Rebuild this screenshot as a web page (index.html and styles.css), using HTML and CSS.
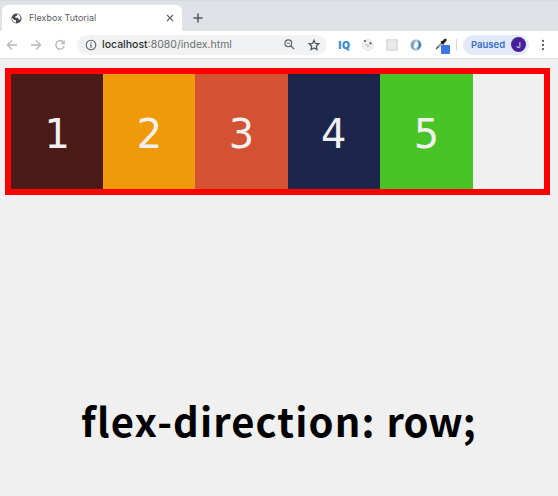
FILE: index.html
```html
<!DOCTYPE html>
<html lang="en">
<head>
<meta charset="utf-8">
<title>Flexbox Tutorial</title>
<link rel="stylesheet" href="styles.css">
</head>
<body>
<header class="tabs">
  <div class="tab">
    <svg class="globe" viewBox="0 0 12 12"><circle cx="6" cy="6" r="5.5" fill="#494c50"/><path d="M1 5.2 3.3 7.4 5.5 7.9 5.3 10.6C2.8 10.3 1.2 8.3 1 5.2ZM7 1.2 6.5 3 4.6 3.6 4.9 5.1 7.4 5.3 8.5 7.1 10 7.4C11 5.4 10 2.3 7 1.2Z" fill="#fff"/></svg>
    <span class="title">Flexbox Tutorial</span>
    <svg class="close" viewBox="0 0 8 8"><path d="m1 1 6 6M7 1 1 7" stroke="#5f6368" stroke-width="1.2"/></svg>
  </div>
  <svg class="plus" viewBox="0 0 10 10"><path d="M5 .5v9M.5 5h9" stroke="#54585c" stroke-width="1.5"/></svg>
</header>
<nav class="toolbar">
  <svg class="nav" viewBox="0 0 12 12"><path d="M11 6H1.5M6 1.4 1.4 6 6 10.6" fill="none" stroke="#b5b7ba" stroke-width="1.3"/></svg>
  <svg class="nav" viewBox="0 0 12 12"><path d="M1 6h9.5M6 1.4 10.6 6 6 10.6" fill="none" stroke="#b5b7ba" stroke-width="1.3"/></svg>
  <svg class="nav" viewBox="0 0 12 12"><path d="M9.6 3.2A4.3 4.3 0 1 0 10.3 7" fill="none" stroke="#b5b7ba" stroke-width="1.3"/><path d="M10.8 1v4.2H6.6Z" fill="#b5b7ba"/></svg>
  <div class="address">
    <svg class="info" viewBox="0 0 12 12"><circle cx="6" cy="6" r="4.8" fill="none" stroke="#5f6368" stroke-width="1.1"/><path d="M6 5.3v3.4M6 3.2v1.2" stroke="#5f6368" stroke-width="1.2"/></svg>
    <span class="url"><b>localhost</b>:8080/index.html</span>
    <svg class="lens" viewBox="0 0 12 12"><circle cx="4.7" cy="4.7" r="3.7" fill="none" stroke="#5f6368" stroke-width="1.2"/><path d="m7.3 7.3 3.7 3.7" stroke="#5f6368" stroke-width="1.4"/><path d="M3 4.7h3.4" stroke="#5f6368"/></svg>
    <svg class="star" viewBox="0 0 12 12"><path d="m6 1.2 1.4 3.2 3.5.4-2.6 2.4.7 3.4-3-1.7-3 1.7.7-3.4L1.1 4.8l3.5-.4Z" fill="none" stroke="#4f5357" stroke-width="1.2"/></svg>
  </div>
  <span class="iq">IQ</span>
  <svg class="ext face" viewBox="0 0 12 12"><circle cx="6" cy="6" r="5.5" fill="#f2f2f2" stroke="#dedede" stroke-width=".8"/><circle cx="6" cy="6.7" r="1.5" fill="#ccc"/><path d="M2 1h2v2H2Z" fill="#777"/><path d="M7.5 3.3h2v2h-2Z" fill="#555"/><path d="M3.5 5h1v1h-1Z" fill="#999"/></svg>
  <svg class="ext atom" viewBox="0 0 12 12"><path d="M0 0h12v12H0Z" fill="#e0e0e0"/><g fill="none" stroke="#f0f0f0" stroke-width=".8"><ellipse cx="6" cy="6" rx="4.6" ry="1.8"/><ellipse cx="6" cy="6" rx="4.6" ry="1.8" transform="rotate(60 6 6)"/><ellipse cx="6" cy="6" rx="4.6" ry="1.8" transform="rotate(120 6 6)"/></g></svg>
  <svg class="ext swirl" viewBox="0 0 12 12"><circle cx="6" cy="6" r="5.8" fill="#b3c8d8"/><path d="M5 1C-.3 3 .3 9.7 4.8 11 2.6 8 3 4.5 5 1Z" fill="#7898b2"/><path d="M7.3 1C12.5 3 12 9.4 6.7 11 9.5 8 9.2 4 7.3 1Z" fill="#4179a9"/><ellipse cx="6" cy="6" rx="1.8" ry="3.4" fill="#f7fafc" transform="rotate(20 6 6)"/></svg>
  <svg class="dropper" viewBox="0 0 16 18"><path d="m2.200 10.800 5.300-5.300" stroke="#a0a5a9" stroke-width="2.400"/><path d="m1 12 2.200-2.200" stroke="#555" stroke-width="1.400"/><path d="m6 4.300 3 3" stroke="#222" stroke-width="1.600"/><path d="m7.500 5.800 2.800-2.800" stroke="#222" stroke-width="2.800" stroke-linecap="round"/><rect x="6" y="8" width="9" height="9" rx="1" fill="#3878e6"/></svg>
  <i class="divider"></i>
  <div class="profile"><span>Paused</span><span class="avatar">J</span></div>
  <svg class="dots" viewBox="0 0 4 12"><g fill="#55585c"><circle cx="2" cy="1.9" r="1.15"/><circle cx="2" cy="6" r="1.15"/><circle cx="2" cy="10.1" r="1.15"/></g></svg>
</nav>
<main>
  <section class="container">
    <div class="box one">1</div>
    <div class="box two">2</div>
    <div class="box three">3</div>
    <div class="box four">4</div>
    <div class="box five">5</div>
  </section>
  <h1 class="caption"><span class="property">flex-direction:</span> row;</h1>
</main>
</body>
</html>
```
FILE: styles.css
```css
* { box-sizing: border-box; }
body { margin: 0; width: 558px; height: 496px; overflow: hidden; background: #f0f0f0; font-family: Inter, "Liberation Sans", sans-serif; }
svg { display: block; flex: none; overflow: visible; }
.tabs { display: flex; align-items: flex-end; height: 31px; background: linear-gradient(#d5dadd 0, #dfe2e7 2px); }
.tab { display: flex; align-items: center; width: 180px; height: 26px; margin-left: 2px; padding-left: 9px; background: #fff; border-radius: 6px 6px 0 0; }
.globe { width: 11px; height: 11px; }
.title { width: 137px; margin-left: 7px; font-size: 9px; line-height: 12px; color: #5b5e62; white-space: nowrap; }
.close { width: 8px; height: 8px; }
.plus { width: 10px; height: 10px; margin: 0 0 8px 11px; }
.toolbar { display: flex; align-items: center; height: 28px; padding-left: 6px; background: #fff; border-bottom: 1px solid #dedede; }
.nav { width: 12px; height: 12px; margin-right: 12px; }
.address { display: flex; align-items: center; width: 250px; height: 20px; margin-left: -1px; padding-left: 8px; border-radius: 10px; background: #f0f2f3; }
.info { width: 12px; height: 12px; }
.url { width: 182px; margin-left: 5px; font-size: 10.5px; line-height: 14px; color: #6b6e72; white-space: nowrap; }
.url b { color: #2d2f32; font-weight: 500; }
.lens { width: 11px; height: 11px; }
.star { width: 12px; height: 12px; margin-left: 13px; }
.iq { width: 24px; margin-left: 11px; font: 800 10.5px/14px "Open Sans", sans-serif; color: #388bcb; }
.ext { width: 12px; height: 12px; }
.atom, .swirl { margin-left: 12px; }
.dropper { width: 16px; height: 18px; margin: 2px 0 0 13px; }
.divider { width: 1px; height: 12px; margin-left: 5px; background: #d6d6d6; }
.profile { display: flex; align-items: center; width: 66px; height: 20px; margin-left: 6px; padding-left: 8px; border-radius: 10px; background: #e2eaf8; color: #366dca; font-size: 9.5px; font-weight: 600; }
.avatar { display: flex; align-items: center; justify-content: center; width: 15px; height: 15px; margin-left: 6px; border-radius: 50%; background: #48209a; color: #ddd5f1; font-size: 8px; font-weight: 500; }
.dots { width: 4px; height: 12px; margin-left: 12px; }
main { padding: 9px 8px 0 5px; }
.container { display: flex; height: 127px; border: 6px solid #f00; }
.box { display: flex; align-items: center; justify-content: center; width: 92.24px; padding-top: 5px; color: #f0f0f0; font: 40px/1 "DejaVu Sans", sans-serif; }
.one { background: #4b1b17; }
.two { background: #f09a0a; }
.three { background: #d35233; }
.four { background: #1c264b; }
.five { width: 93px; background: #49c426; }
.caption { margin: 195px 0 0 76px; font: 700 40px/60px "Noto Sans CJK JP", sans-serif; word-spacing: 2px; color: #000; white-space: nowrap; }
.property { letter-spacing: 1.1px; }
```
